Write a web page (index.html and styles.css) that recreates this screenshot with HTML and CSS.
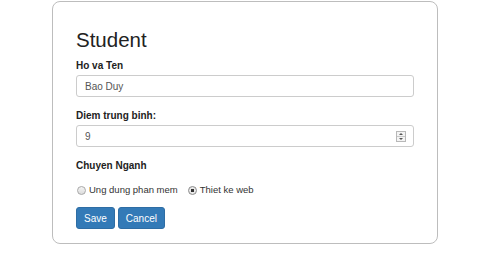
FILE: index.html
```html
<!DOCTYPE html>
<html lang="en">
<head>
  <meta charset="UTF-8" />
  <meta name="viewport" content="width=device-width, initial-scale=1.0"/>
  <title>Student</title>
  <link rel="stylesheet" href="styles.css">
</head>
<body>

<div class="student-box">
  <h2>Student</h2>

  <label class="field-label" for="hoten">Ho va Ten</label>
  <input class="field-input" id="hoten" type="text" value="Bao Duy">

  <label class="field-label" for="diem">Diem trung binh:</label>
  <div class="number-wrap">
    <input class="field-input" id="diem" type="text" value="9">
    <span class="spinner">
      <svg width="10" height="11" viewBox="0 0 10 11">
        <rect x="0.5" y="0.5" width="9" height="10" fill="#f4f4f4" stroke="#b8b8b8"/>
        <line x1="1" y1="5.5" x2="9" y2="5.5" stroke="#c8c8c8"/>
        <path d="M3 4 L5 2 L7 4 Z" fill="#555"/>
        <path d="M3 7 L5 9 L7 7 Z" fill="#555"/>
      </svg>
    </span>
  </div>

  <div class="group-label">Chuyen Nganh</div>

  <div class="radio-row">
    <label class="radio-item"><input type="radio" name="nganh"> Ung dung phan mem</label>
    <label class="radio-item"><input type="radio" name="nganh" checked> Thiet ke web</label>
  </div>

  <div class="actions">
    <button class="btn">Save</button>
    <button class="btn">Cancel</button>
  </div>
</div>

</body>
</html>
```

FILE: styles.css
```css
* { box-sizing: border-box; }

body {
  font-family: "Liberation Sans", Arial, sans-serif;
  margin: 0;
  background: #fff;
  color: #333;
}

.student-box {
  width: 386px;
  margin: 1px 0 0 52px;
  padding: 26px 23px 14px;
  border: 1px solid #bdbdbd;
  border-radius: 8px;
  display: flex;
  flex-direction: column;
}

.student-box h2 {
  font-size: 20.5px;
  font-weight: normal;
  line-height: 23px;
  margin: 0 0 8px;
  color: #222;
}

.field-label,
.group-label {
  font-size: 10px;
  font-weight: bold;
  line-height: 14px;
  margin-bottom: 2px;
  color: #222;
}

.field-input {
  width: 100%;
  height: 22px;
  border: 1px solid #ccc;
  border-radius: 3px;
  padding: 0 8px;
  font-family: inherit;
  font-size: 10px;
  color: #555;
  margin: 0 0 12px;
  outline: none;
}

.number-wrap {
  position: relative;
}

.spinner {
  position: absolute;
  right: 8px;
  top: 6px;
  line-height: 0;
}

.group-label {
  margin-bottom: 10px;
}

.radio-row {
  display: flex;
  gap: 9px;
  line-height: 14px;
  margin-bottom: 10px;
}

.radio-item {
  display: flex;
  align-items: center;
  gap: 3px;
  font-size: 9.5px;
  color: #333;
  padding-left: 1px;
}

.radio-item input {
  appearance: none;
  -webkit-appearance: none;
  width: 9px;
  height: 9px;
  margin: 0;
  border: 1px solid #a8a8a8;
  border-radius: 50%;
  background: linear-gradient(#f4f4f4, #dcdcdc);
}

.radio-item input:checked {
  background: radial-gradient(circle, #333 0 1.6px, #e8e8e8 2px);
  border-color: #8a8a8a;
}

.actions {
  display: flex;
  gap: 3px;
}

.btn {
  height: 22px;
  padding: 0 7px;
  border: 1px solid #2e6da4;
  border-radius: 3px;
  background-color: #337ab7;
  color: #fff;
  font-family: inherit;
  font-size: 10px;
  cursor: pointer;
}
```
